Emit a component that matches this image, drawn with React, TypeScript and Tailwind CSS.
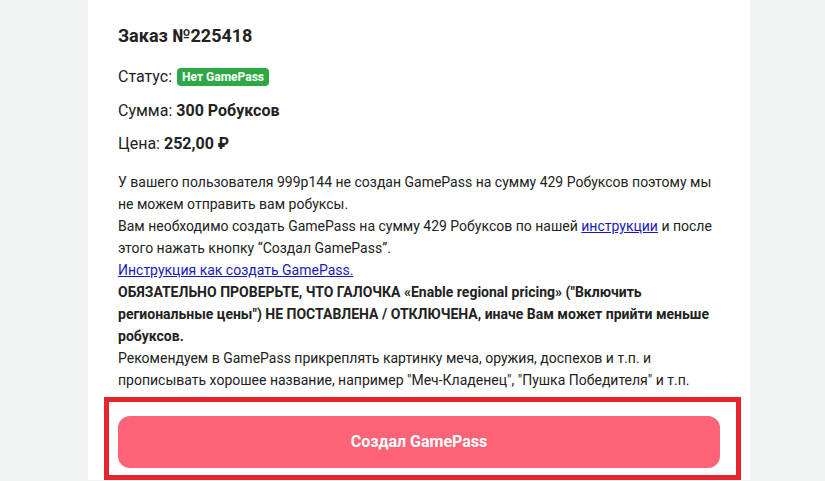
export default function App() {
  return (
    <div className="min-h-[481px] bg-[#f2f3f3] font-['Roboto',sans-serif] text-[#222]">
      <div className="ml-[88px] w-[662px] bg-white px-[30px] pt-[24px]">
        <h1 className="text-[18px] font-bold leading-[24px]">Заказ №225418</h1>

        <div className="mt-[19px] flex items-center gap-[5px] text-[16px] leading-[20px]">
          <span>Статус:</span>
          <span className="rounded-[4px] bg-[#2ea844] px-[5px] py-[2px] text-[12px] leading-[14px] font-bold text-white">Нет GamePass</span>
        </div>
        <p className="mt-[14px] text-[16px] leading-[20px]">
          Сумма: <b>300 Робуксов</b>
        </p>
        <p className="mt-[13px] text-[16px] leading-[20px]">
          Цена: <b>252,00 ₽</b>
        </p>

        <div className="mt-[17px] text-[14px] leading-[22px]">
          <p>У вашего пользователя 999р144 не создан GamePass на сумму 429 Робуксов поэтому мы не можем отправить вам робуксы.</p>
          <p>
            Вам необходимо создать GamePass на сумму 429 Робуксов по нашей{' '}
            <a className="text-[#1a1ab8] underline" href="#">инструкции</a> и после этого нажать кнопку “Создал GamePass”.
          </p>
          <p>
            <a className="text-[#1a1ab8] underline" href="#">Инструкция как создать GamePass.</a>
          </p>
          <p className="font-bold">
            ОБЯЗАТЕЛЬНО ПРОВЕРЬТЕ, ЧТО ГАЛОЧКА «Enable regional pricing» ("Включить региональные цены") НЕ ПОСТАВЛЕНА / ОТКЛЮЧЕНА, иначе Вам может прийти меньше робуксов.
          </p>
          <p>
            Рекомендуем в GamePass прикреплять картинку меча, оружия, доспехов и т.п. и прописывать хорошее название, например "Меч-Кладенец", "Пушка Победителя" и т.п.
          </p>
        </div>

        <div className="ml-[-14px] mr-[-21px] mt-[6px] border-[5px] border-[#e3262d] pl-[9px] pr-[16px] pt-[14px] pb-[7px]">
          <button className="h-[52px] w-full rounded-[12px] bg-[#ff6378] text-[16px] font-bold text-white">
            Создал GamePass
          </button>
        </div>
      </div>
    </div>
  );
}
